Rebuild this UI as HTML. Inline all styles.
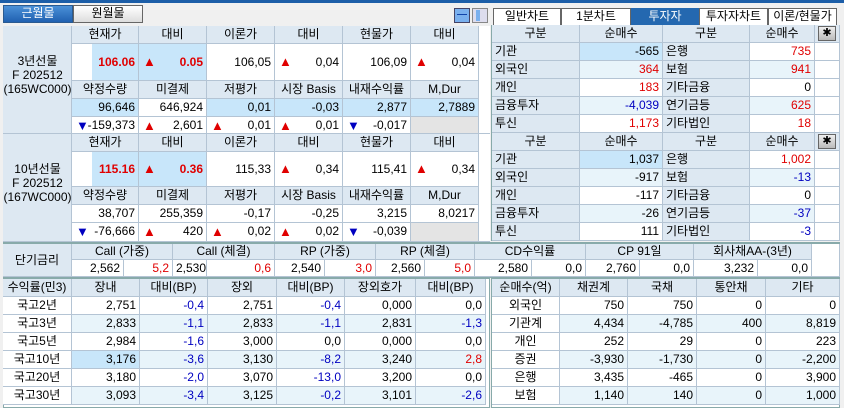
<!DOCTYPE html>
<html><head><meta charset="utf-8">
<style>
body{margin:0;width:844px;height:408px;overflow:hidden;background:#f0f0f0;position:relative;font-family:"Liberation Sans","Noto Sans CJK KR",sans-serif;font-size:12px;color:#000}
.c{position:absolute;box-sizing:border-box;border-right:1px solid #b4c4d4;border-bottom:1px solid #b4c4d4;white-space:nowrap;overflow:hidden;line-height:17px;padding:0 3px}
.h{background:#dde8f2;text-align:center}
.r{text-align:right}
.l{text-align:left}
.ar{position:absolute;left:4px;font-size:13px}
.tab{position:absolute;box-sizing:border-box;border:1px solid #666;text-align:center;line-height:15px;font-size:12px;background:#fff}
</style></head><body>
<div style="position:absolute;left:0;top:0;width:844px;height:3px;background:#1c5ea8"></div>
<div class="tab" style="left:3px;top:5px;width:70px;height:18px;background:linear-gradient(#4a90d8,#2060b0);color:#fff;border-color:#2a5a90">근월물</div>
<div class="tab" style="left:73px;top:5px;width:70px;height:18px;background:linear-gradient(#fff,#ddd)">원월물</div>
<div style="position:absolute;left:454px;top:8px;width:16px;height:15px;border:1px solid #446;background:#7ab0ee;box-sizing:border-box"><div style="position:absolute;left:2px;top:5px;width:10px;height:1px;background:#14a"></div></div>
<div style="position:absolute;left:472px;top:8px;width:16px;height:15px;border:1px solid #888;background:#dde;box-sizing:border-box"><div style="position:absolute;left:3px;top:1px;width:4px;height:11px;background:#7ab0ee"></div></div>
<div class="tab" style="left:493px;top:8px;width:68px;height:18px">일반차트</div>
<div class="tab" style="left:561px;top:8px;width:70px;height:18px">1분차트</div>
<div class="tab" style="left:631px;top:8px;width:68px;height:18px;background:#2468b0;color:#fff;border-color:#2468b0">투자자</div>
<div class="tab" style="left:699px;top:8px;width:69px;height:18px">투자자차트</div>
<div class="tab" style="left:768px;top:8px;width:69px;height:18px">이론/현물가</div>
<div id="g"></div>
<script>
var g=document.getElementById('g'),H='';
function c(x,y,w,h,t,cls,st){if(!(st&&st.indexOf('bold')>=0))t=t.replace(/(\d)\.(\d)/g,'$1,$2');H+='<div class="c '+(cls||'')+'" style="left:'+x+'px;top:'+y+'px;width:'+w+'px;height:'+h+'px;'+(st||'')+'">'+t+'</div>';}
function A(up,t,col){return '<span class="ar" style="color:'+(up?'#e00000':'#0000c0')+'">'+(up?'▲':'▼')+'</span>'+(col?'<span style="color:'+col+'">'+t+'</span>':t);}
H+='<div style="position:absolute;left:3px;top:26px;width:487px;height:216px;border:1px solid #8aa;box-sizing:border-box;background:#fff"></div>';
var cx=[72,139,207,275,343,411,479];
function fut(y0,lbl,d){
 c(3,y0,69,108,'<div style="position:absolute;top:'+ (108/2-26)+'px;left:0;width:69px;text-align:center;line-height:14px">'+lbl+'</div>','h','padding:0');
 var hd1=['현재가','대비','이론가','대비','현물가','대비'],hd2=['약정수량','미결제','저평가','시장 Basis','내재수익률','M,Dur'];
 var ph=y0==26?37:35;
 for(var i=0;i<6;i++){var x=cx[i],w=cx[i+1]-x;
  c(x,y0,w,18,hd1[i],'h');
  c(x,y0+18,w,ph,d.p[i],'r','line-height:'+(ph-1)+'px;'+(i<2?'font-weight:bold;color:#e00000;':'')+(i==0?'background:linear-gradient(90deg,#fff 20px,#c8e6fa 20px);':i==1?'background:#c8e6fa;':''));
  c(x,y0+18+ph,w,18,hd2[i],'h');
  c(x,y0+36+ph,w,18,d.a[i],'r',d.ab[i]);
  c(x,y0+54+ph,w,108-54-ph,d.b[i],'r',i==5?'background:#e4e4e4':'');
 }
 c(479,y0,11,108,'','', 'background:#fff;border-right:none');
}
var L='#c8e6fa',LL='#e8f4fa';
fut(26,'3년선물<br>F 202512<br>(165WC000)',{p:['106.06',A(1,'0.05'),'106.05',A(1,'0.04'),'106.09',A(1,'0.04')],a:['96,646','646,924','0.01','-0.03','2.877','2.7889'],ab:['background:'+L,'','background:'+L,'background:'+L,'background:'+L,'background:'+L],b:[A(0,'-159,373'),A(1,'2,601'),A(1,'0.01'),A(1,'0.01'),A(0,'-0.017'),'']});
fut(134,'10년선물<br>F 202512<br>(167WC000)',{p:['115.16',A(1,'0.36'),'115.33',A(1,'0.34'),'115.41',A(1,'0.34')],a:['38,707','255,359','-0.17','-0.25','3,215','8.0217'],ab:['','','','','',''],b:[A(0,'-76,666'),A(1,'420'),A(1,'0.02'),A(1,'0.02'),A(0,'-0.039'),'']});
var rx=[492,580,663,750,815,838];
function inv(y0,d){
 H+='<div style="position:absolute;left:491px;top:'+y0+'px;width:349px;height:108px;border:1px solid #8aa;box-sizing:border-box;background:#fff"></div>';
 var hd=['구분','순매수','구분','순매수'];
 for(var i=0;i<4;i++)c(rx[i],y0,rx[i+1]-rx[i],18,hd[i],'h');
 c(815,y0,25,18,'<div style="margin:1px auto;width:18px;height:15px;background:linear-gradient(#eee,#bbb);border:1px solid #666;box-sizing:border-box;line-height:13px;font-size:11px">✱</div>','h','padding:0');
 for(var r=0;r<5;r++){var y=y0+18+r*18,bg=r%2?LL:'#fff';
  c(492,y,88,18,d[r][0],'l h','text-align:left;background:#dde8f2');
  c(580,y,83,18,d[r][1],'r',(r==0?'background:'+L:'background:'+bg)+';color:'+d[r][4]);
  c(663,y,87,18,d[r][2],'l h','text-align:left;background:#dde8f2');
  c(750,y,65,18,d[r][3],'r','background:'+bg+';color:'+d[r][5]);
  c(815,y,25,18,'','','background:#fff');
 }
}
var R='#e00000',B='#0000c0',K='#000';
inv(25,[['기관','-565','은행','735',K,R],['외국인','364','보험','941',R,R],['개인','183','기타금융','0',R,K],['금융투자','-4,039','연기금등','625',B,R],['투신','1,173','기타법인','18',R,R]]);
inv(133,[['기관','1,037','은행','1,002',K,R],['외국인','-917','보험','-13',K,B],['개인','-117','기타금융','0',K,K],['금융투자','-26','연기금등','-37',K,B],['투신','111','기타법인','-3',K,B]]);
H+='<div style="position:absolute;left:3px;top:242px;width:837px;height:36px;background:#fff;border-top:2px solid #8aa;border-bottom:2px solid #8aa;box-sizing:border-box"></div>';
c(3,244,69,33,'단기금리','h','line-height:32px');
var sx=[72,173,275,376,475,586,694,812],sm=[124,207,325,425,532,640,758];
var sh=['Call (가중)','Call (체결)','RP (가중)','RP (체결)','CD수익률','CP 91일','회사채AA-(3년)'];
var sv=[['2,562','5.2',R],['2,530','0.6',R],['2,540','3.0',R],['2,560','5.0',R],['2,580','0.0',K],['2,760','0.0',K],['3,232','0.0',K]];
for(var i=0;i<7;i++){c(sx[i],244,sx[i+1]-sx[i],16,sh[i],'h','line-height:15px');c(sx[i],260,sm[i]-sx[i],17,sv[i][0],'r');c(sm[i],260,sx[i+1]-sm[i],17,sv[i][1],'r','color:'+sv[i][2]);}
c(812,244,28,33,'','','background:#fff');
H+='<div style="position:absolute;left:3px;top:278px;width:487px;height:130px;background:#fff;border:1px solid #8aa;box-sizing:border-box"></div>';
var bx=[3,72,140,208,277,345,416,486];
var bh=['수익률(민3)','장내','대비(BP)','장외','대비(BP)','장외호가','대비(BP)'];
for(var i=0;i<7;i++)c(bx[i],279,bx[i+1]-bx[i],18,bh[i],'h');
var bd=[['국고2년','2.751','-0.4','2.751','-0.4','0.000','0.0',K],['국고3년','2.833','-1.1','2.833','-1.1','2.831','-1.3',B],['국고5년','2.984','-1.6','3.000','0.0','0.000','0.0',K],['국고10년','3.176','-3.6','3.130','-8.2','3.240','2.8',R],['국고20년','3.180','-2.0','3.070','-13.0','3.200','0.0',K],['국고30년','3.093','-3.4','3.125','-0.2','3.101','-2.6',B]];
for(var r=0;r<6;r++){var y=297+r*18,bg=r%2?LL:'#fff',d=bd[r];
 c(3,y,69,18,d[0],'','text-align:center;background:#fff');
 for(var i=1;i<7;i++){var col=K;if(i==2)col=B;if(i==4)col=d[4]=='0.0'?K:B;if(i==6)col=d[7];
  c(bx[i],y,bx[i+1]-bx[i],18,d[i],'r','background:'+(r==3&&i==1?L:bg)+';color:'+col);}
}
H+='<div style="position:absolute;left:491px;top:278px;width:349px;height:130px;background:#fff;border:1px solid #8aa;box-sizing:border-box"></div>';
var qx=[492,560,628,697,766,840],qh=['순매수(억)','채권계','국채','통안채','기타'];
for(var i=0;i<5;i++)c(qx[i],279,qx[i+1]-qx[i],18,qh[i],'h');
var qd=[['외국인','750','750','0','0'],['기관계','4,434','-4,785','400','8,819'],['개인','252','29','0','223'],['증권','-3,930','-1,730','0','-2,200'],['은행','3,435','-465','0','3,900'],['보험','1,140','140','0','1,000']];
for(var r=0;r<6;r++){var y=297+r*18,bg=r%2?LL:'#fff';
 c(492,y,68,18,qd[r][0],'','text-align:center;background:#fff');
 for(var i=1;i<5;i++)c(qx[i],y,qx[i+1]-qx[i],18,qd[r][i],'r','background:'+bg);
}
g.innerHTML=H;
</script>
</body></html>
